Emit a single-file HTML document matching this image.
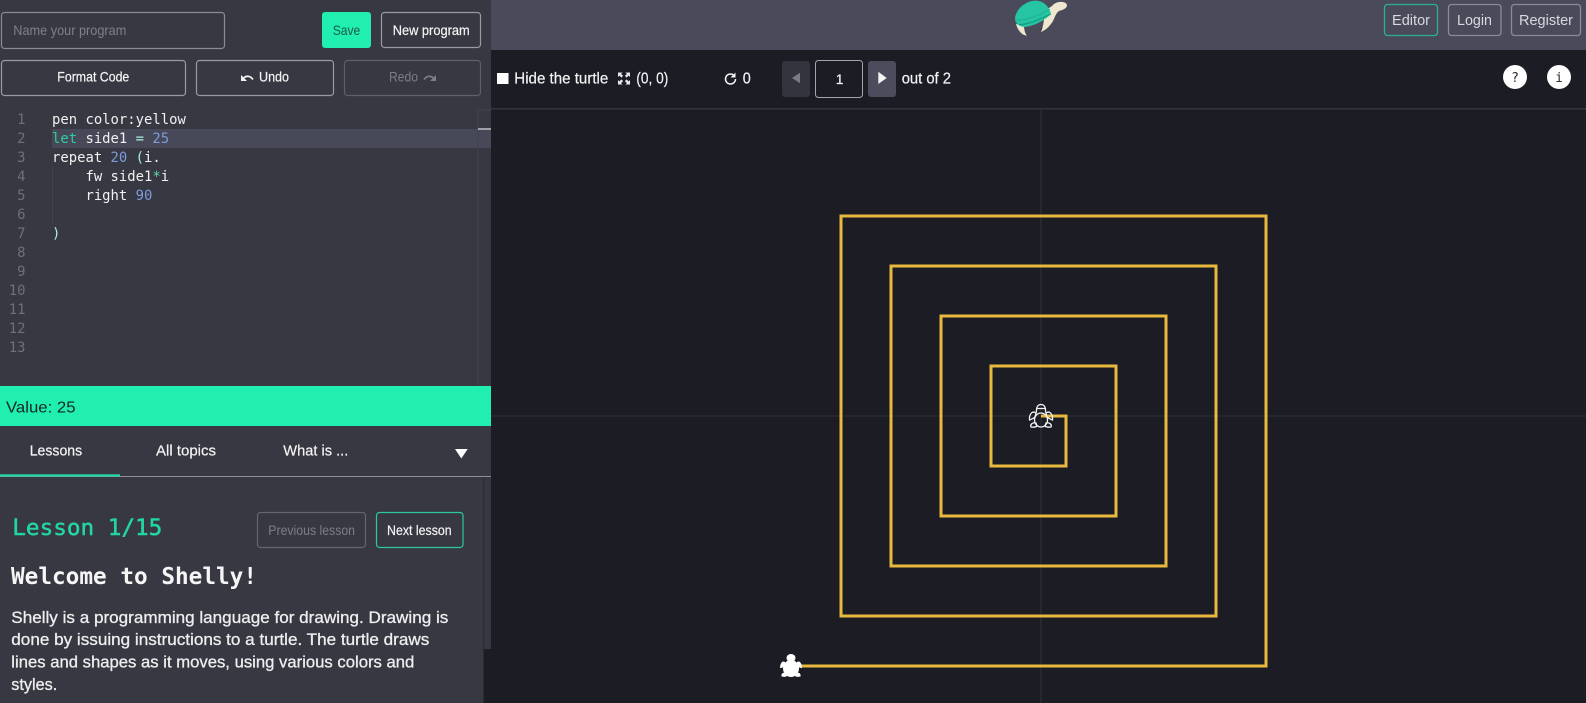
<!DOCTYPE html>
<html lang="en">
<head>
<meta charset="utf-8">
<title>Shelly</title>
<style>
html,body{margin:0;padding:0;width:1586px;height:703px;overflow:hidden;background:#1b1c24}
svg{display:block}
.ui{font-family:"Liberation Sans",sans-serif;font-size:14px}
.m{font-family:"DejaVu Sans Mono",monospace;font-size:13.9px;fill:#f1f1f1}
.n{font-family:"DejaVu Sans Mono",monospace;font-size:13.9px;fill:#6f7079;text-anchor:end}
.w{fill:#f4f4f4;stroke:#f4f4f4;stroke-width:.2px}
.g{fill:#7c7d86}
</style>
</head>
<body>
<svg xmlns="http://www.w3.org/2000/svg" width="1586" height="703" viewBox="0 0 1586 703">
<!-- canvas background -->
<rect width="1586" height="703" fill="#1b1c24"/>
<line x1="1041" y1="109" x2="1041" y2="703" stroke="#2f3039"/>
<line x1="491" y1="416" x2="1586" y2="416" stroke="#2f3039"/>

<!-- spiral -->
<path d="M1041 416H1066V466H991V366H1116V516H941V316H1166V566H891V266H1216V616H841V216H1266V666H791" fill="none" stroke="#e8b93c" stroke-width="3"/>

<!-- outline turtle -->
<g transform="translate(1041,416)" fill="none" stroke="#f4f4f4" stroke-width="1.300">
<ellipse cx="0" cy="4" rx="6.500" ry="7"/>
<path d="M-4.500 -3.500C-5 -9-3 -11.500 0 -11.500 3 -11.500 5 -9 4.500 -3.500"/>
<path d="M-4.500 -7.500H4.500"/>
<path d="M-5 -3C-9 -6-12 -1-11.500 4-9 3-7 2-6 1Z"/>
<path d="M5 -3C9 -6 12 -1 11.500 4 9 3 7 2 6 1Z"/>
<path d="M-5 7C-9 6-11 9-10 11-7 11.500-5 11-4 10Z"/>
<path d="M5 7C9 6 11 9 10 11 7 11.500 5 11 4 10Z"/>
</g>
<!-- filled turtle -->
<g transform="translate(791,666)" fill="#fff">
<ellipse cx="0" cy="2.500" rx="8" ry="8.500"/>
<ellipse cx="0" cy="-8" rx="4.500" ry="4"/>
<path d="M-6 -4C-9 -6-11 -2-11 2-9 2-7 1-6 0Z"/>
<path d="M6 -4C9 -6 11 -2 11 2 9 2 7 1 6 0Z"/>
<path d="M-6 7C-9 6-10 9-9.500 10.500-7 11-5 11-4 10Z"/>
<path d="M6 7C9 6 10 9 9.500 10.500 7 11 5 11 4 10Z"/>
</g>

<!-- top bar -->
<rect x="491" y="0" width="1095" height="50" fill="#4a4a5a"/>
<!-- logo -->
<g>
<path d="M1024 26C1024 31 1025 34 1028 36L1024 36 1020 28Z" fill="#2a2530"/>
<path d="M1048 22L1040 30 1044 31 1052 22Z" fill="#2a2530"/>
<path d="M1016 24C1018 31 1022 35 1027 36 1025 33 1024 30 1024 25Z" fill="#efe6cf"/>
<path d="M1046 9C1050 8 1052 6 1054 4 1058 1 1066 1 1067 5 1067 9 1062 10 1059 11 1056 13 1055 17 1053 21 1050 26 1046 30 1041 32 1043 27 1044 22 1044 17Z" fill="#efe6cf"/>
<path d="M1015 18C1016 10 1023 3 1032 1 1041 -1 1049 5 1051 14 1046 19 1036 26 1024 27 1018 26 1015 23 1015 18Z" fill="#25c4a2"/>
<path d="M1016.500 20C1026 21 1040 15 1050 9" fill="none" stroke="#1fb093" stroke-width="1"/>
<path d="M1019 24.500C1029 25 1042 18 1051 14" fill="none" stroke="#179a80" stroke-width="1.200"/>
</g>
<rect x="1384.500" y="4.500" width="53" height="31" rx="3" fill="none" stroke="#2cb093" stroke-width="1.300"/>
<rect x="1448.500" y="4.500" width="52.500" height="31" rx="3" fill="none" stroke="#8b8b98" stroke-width="1.300"/>
<rect x="1511.500" y="4.500" width="69" height="31" rx="3" fill="none" stroke="#8b8b98" stroke-width="1.300"/>
<text class="ui" x="1392" y="25" style="font-size:15px" fill="#d8d8df" textLength="38" lengthAdjust="spacingAndGlyphs">Editor</text>
<text class="ui" x="1457" y="25" style="font-size:15px" fill="#d8d8df" textLength="35" lengthAdjust="spacingAndGlyphs">Login</text>
<text class="ui" x="1519" y="25" style="font-size:15px" fill="#d8d8df" textLength="54" lengthAdjust="spacingAndGlyphs">Register</text>

<!-- toolbar -->
<rect x="491" y="108" width="1095" height="1.500" fill="#34353f"/>
<rect x="497" y="73" width="11.500" height="11" fill="#fff"/>
<text class="ui w" x="514.300" y="83.500" style="font-size:16px" textLength="94" lengthAdjust="spacingAndGlyphs">Hide the turtle</text>
<g fill="#e8e8e8">
<path d="M618 72.500h4.500l-1.400 1.400 2 2-1.700 1.700-2-2-1.400 1.400Z"/>
<path d="M630 72.500h-4.500l1.400 1.400-2 2 1.700 1.700 2-2 1.400 1.400Z"/>
<path d="M618 84.500h4.500l-1.400-1.400 2-2-1.700-1.700-2 2-1.400-1.400Z"/>
<path d="M630 84.500h-4.500l1.400-1.400-2-2 1.700-1.700 2 2 1.400-1.400Z"/>
</g>
<text class="ui w" x="636.300" y="83.500" style="font-size:16px" textLength="32" lengthAdjust="spacingAndGlyphs">(0, 0)</text>
<path d="M733.500 75A5 5 0 1 0 735.500 79" fill="none" stroke="#f4f4f4" stroke-width="1.500"/>
<path d="M735.500 72.500V77.500H730.500Z" fill="#f4f4f4"/>
<text class="ui w" x="742.700" y="83.500" style="font-size:16px" textLength="8" lengthAdjust="spacingAndGlyphs">0</text>
<rect x="782" y="61" width="28" height="36" rx="3" fill="#33343e"/>
<path d="M800 72.700V83.300L792 78Z" fill="#7a7a85"/>
<rect x="815.500" y="60.500" width="47" height="37" rx="3" fill="#1b1c24" stroke="#a5a5ab" stroke-width="1"/>
<text class="ui w" x="839.700" y="84" text-anchor="middle">1</text>
<rect x="868" y="61" width="28" height="36" rx="3" fill="#4c4c5c"/>
<path d="M878.300 71.700V84L886.700 78Z" fill="#f4f4f4"/>
<text class="ui w" x="901.700" y="83.500" style="font-size:16px" textLength="49.300" lengthAdjust="spacingAndGlyphs">out of 2</text>
<circle cx="1515" cy="77" r="12" fill="#fff"/>
<circle cx="1559" cy="77" r="12" fill="#fff"/>
<text x="1515" y="82" text-anchor="middle" font-family="DejaVu Sans Mono" font-size="13" fill="#2a2b33">?</text>
<text x="1559" y="82" text-anchor="middle" font-family="DejaVu Sans Mono" font-size="13" fill="#2a2b33">i</text>

<!-- left panel -->
<rect x="0" y="0" width="491" height="703" fill="#373842"/>

<!-- top controls -->
<rect x="1.500" y="12.500" width="223" height="36" rx="3" fill="none" stroke="#8b8c93" stroke-width="1.200"/>
<text class="ui" x="13.300" y="35" fill="#7f8088" textLength="113" lengthAdjust="spacingAndGlyphs">Name your program</text>
<rect x="322" y="12" width="49" height="36" rx="3" fill="#20efb0"/>
<text class="ui" x="332.700" y="35" fill="#1d5a4a" textLength="27.600" lengthAdjust="spacingAndGlyphs">Save</text>
<rect x="381.500" y="12.500" width="99" height="35" rx="3" fill="none" stroke="#9a9ba1" stroke-width="1.200"/>
<text class="ui w" x="392.700" y="35" textLength="77" lengthAdjust="spacingAndGlyphs">New program</text>

<rect x="1.500" y="60.500" width="184" height="35" rx="3" fill="none" stroke="#9a9ba1" stroke-width="1.200"/>
<text class="ui w" x="57.300" y="81.500" textLength="72" lengthAdjust="spacingAndGlyphs">Format Code</text>
<rect x="196.500" y="60.500" width="137" height="35" rx="3" fill="none" stroke="#9a9ba1" stroke-width="1.200"/>
<path d="M241 75V81H247Z" fill="#f4f4f4"/>
<path d="M243.500 78C246.500 75.500 250 75.500 253 79.500" fill="none" stroke="#f4f4f4" stroke-width="1.700"/>
<text class="ui w" x="259" y="81.500" textLength="30" lengthAdjust="spacingAndGlyphs">Undo</text>
<rect x="344.500" y="60.500" width="136" height="35" rx="3" fill="none" stroke="#5e5f68" stroke-width="1.200"/>
<text class="ui g" x="389" y="81.500" textLength="29" lengthAdjust="spacingAndGlyphs">Redo</text>
<path d="M436 75V81H430Z" fill="#7c7d86"/>
<path d="M433.500 78C430.500 75.500 427 75.500 424 79.500" fill="none" stroke="#7c7d86" stroke-width="1.700"/>

<!-- editor -->
<rect x="52" y="129" width="439" height="19" fill="#484958"/>
<line x1="478" y1="110" x2="478" y2="386" stroke="#42434e"/>
<line x1="478" y1="110" x2="491" y2="110" stroke="#42434e"/>
<rect x="478" y="128" width="13" height="2" fill="#a0a0a8"/>
<line x1="52.500" y1="167" x2="52.500" y2="224" stroke="#42434e"/>
<text class="n" x="25.500" y="124">1</text>
<text class="n" x="25.500" y="143">2</text>
<text class="n" x="25.500" y="162">3</text>
<text class="n" x="25.500" y="181">4</text>
<text class="n" x="25.500" y="200">5</text>
<text class="n" x="25.500" y="219">6</text>
<text class="n" x="25.500" y="238">7</text>
<text class="n" x="25.500" y="257">8</text>
<text class="n" x="25.500" y="276">9</text>
<text class="n" x="25.500" y="295">10</text>
<text class="n" x="25.500" y="314">11</text>
<text class="n" x="25.500" y="333">12</text>
<text class="n" x="25.500" y="352">13</text>
<text class="m" x="52" y="124" xml:space="preserve">pen color:yellow</text>
<text class="m" x="52" y="143" xml:space="preserve"><tspan fill="#28cfa2">let</tspan> side1 <tspan fill="#a9eedb">=</tspan> <tspan fill="#7d9bdc">25</tspan></text>
<text class="m" x="52" y="162" xml:space="preserve">repeat <tspan fill="#7d9bdc">20</tspan> <tspan fill="#a9f0d8">(</tspan>i.</text>
<text class="m" x="52" y="181" xml:space="preserve">    fw side1<tspan fill="#5fd9a7">*</tspan>i</text>
<text class="m" x="52" y="200" xml:space="preserve">    right <tspan fill="#7d9bdc">90</tspan></text>
<text class="m" x="52" y="238" xml:space="preserve"><tspan fill="#a9f0d8">)</tspan></text>

<!-- value bar -->
<rect x="0" y="386" width="491" height="40" fill="#20efb0"/>
<text class="ui" x="6" y="412.500" style="font-size:16px" fill="#15261f" textLength="69.500" lengthAdjust="spacingAndGlyphs">Value: 25</text>

<!-- tabs -->
<text class="ui w" x="29.700" y="455.500" style="font-size:15px" textLength="52.500" lengthAdjust="spacingAndGlyphs">Lessons</text>
<text class="ui w" x="156" y="455.500" style="font-size:15px" textLength="60" lengthAdjust="spacingAndGlyphs">All topics</text>
<text class="ui w" x="283.300" y="455.500" style="font-size:15px" textLength="65" lengthAdjust="spacingAndGlyphs">What is ...</text>
<path d="M455 449H467.700L461.300 458.500Z" fill="#fff"/>
<rect x="0" y="476" width="491" height="1" fill="#8f9097"/>
<rect x="0" y="474.300" width="120" height="2.200" fill="#20d8a6"/>

<!-- lesson scrollbar -->
<rect x="483" y="477" width="1.200" height="226" fill="#2a2b34"/>
<rect x="484" y="649" width="7" height="54" fill="#1b1c24"/>

<!-- lesson -->
<text x="12.300" y="535" font-family="DejaVu Sans Mono" font-size="22.600" fill="#23d5a3" stroke="#23d5a3" stroke-width=".5" textLength="150" lengthAdjust="spacingAndGlyphs">Lesson 1/15</text>
<rect x="257.500" y="512.500" width="108" height="35" rx="3" fill="none" stroke="#64656e" stroke-width="1.200"/>
<text class="ui g" x="268.300" y="535" textLength="86.700" lengthAdjust="spacingAndGlyphs">Previous lesson</text>
<rect x="376.500" y="512.500" width="86.500" height="35" rx="3" fill="none" stroke="#2cc9a0" stroke-width="1.200"/>
<text class="ui w" x="387" y="535" textLength="64.700" lengthAdjust="spacingAndGlyphs">Next lesson</text>
<text x="11" y="584" font-family="DejaVu Sans Mono" font-weight="bold" font-size="22.800" fill="#f6f6f6" textLength="246" lengthAdjust="spacingAndGlyphs">Welcome to Shelly!</text>
<g font-family="Liberation Sans" font-size="16.500" fill="#eeeeee" stroke="#eeeeee" stroke-width=".3">
<text x="11.300" y="623" textLength="437" lengthAdjust="spacingAndGlyphs">Shelly is a programming language for drawing. Drawing is</text>
<text x="11.300" y="645.200" textLength="418" lengthAdjust="spacingAndGlyphs">done by issuing instructions to a turtle. The turtle draws</text>
<text x="11.300" y="667.600" textLength="403" lengthAdjust="spacingAndGlyphs">lines and shapes as it moves, using various colors and</text>
<text x="11.300" y="689.800" textLength="46" lengthAdjust="spacingAndGlyphs">styles.</text>
</g>
</svg>
</body>
</html>
